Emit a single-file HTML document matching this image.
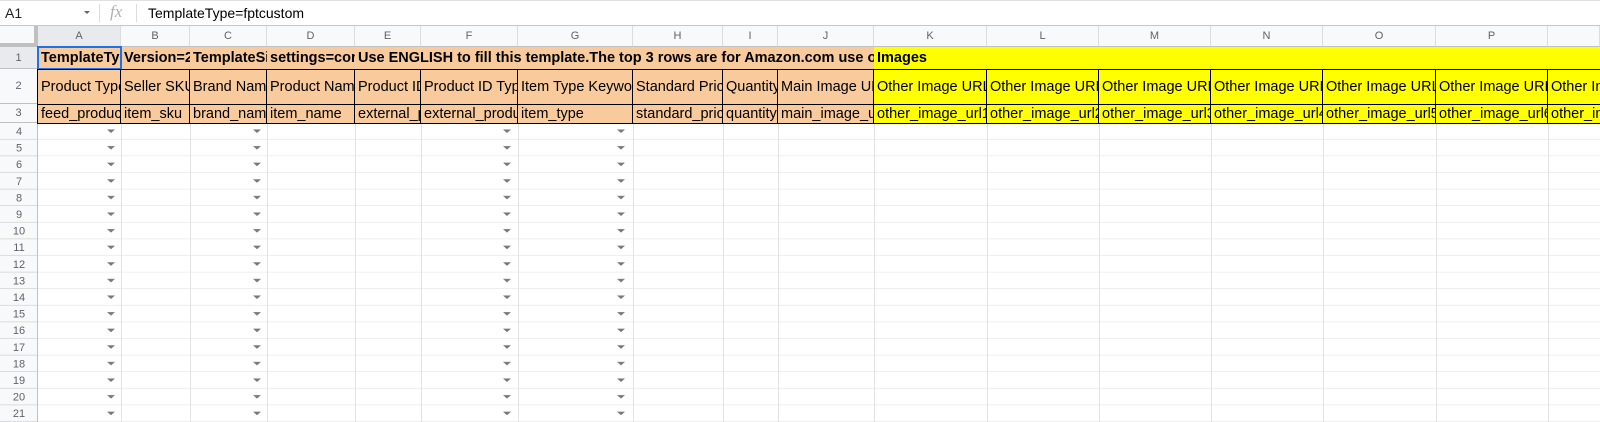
<!DOCTYPE html>
<html><head><meta charset="utf-8"><style>
*{box-sizing:border-box;margin:0;padding:0}
body{width:1600px;height:422px;overflow:hidden;background:#fff;font-family:"Liberation Sans",Arial,sans-serif;position:relative}
.a{position:absolute}
.c{position:absolute;overflow:hidden;white-space:nowrap;font-size:14.5px;color:#000;padding-left:3px;display:flex;align-items:center}
.h{position:absolute;font-size:11px;color:#5f6368;text-align:center;display:flex;align-items:center;justify-content:center;border-right:1px solid #dadce0;border-bottom:1px solid #c0c0c0;background:#f8f9fa}
.r2,.r3{border:1px solid #000;margin-left:-1px}
.o{background:#f9cb9c}.y{background:#ffff00}
.b{font-weight:bold}
</style></head><body>
<div class="a" style="left:0;top:0;width:1600px;height:26px;border-bottom:1px solid #c7c7c7;border-top:1px solid #e0e0e0"></div>
<div class="a" style="left:5px;top:5px;font-size:14px;color:#202124">A1</div>
<div class="a" style="left:84px;top:11px;width:0;height:0;border-left:3px solid transparent;border-right:3px solid transparent;border-top:3px solid #666"></div>
<div class="a" style="left:99px;top:4px;width:1px;height:18px;background:#dadce0"></div>
<div class="a" style="left:110px;top:2px;font-size:17px;font-style:italic;color:#b0b0b0;font-family:'Liberation Serif',serif">fx</div>
<div class="a" style="left:136px;top:4px;width:1px;height:18px;background:#dadce0"></div>
<div class="a" style="left:148px;top:5px;font-size:14px;color:#000">TemplateType=fptcustom</div>

<svg class="a" style="left:0;top:0" width="1600" height="422">
<defs>
<pattern id="hl" x="0" y="123" width="1600" height="16.6" patternUnits="userSpaceOnUse"><rect x="0" y="16" width="1600" height="0.8" fill="#e2e2e2"/></pattern>
<pattern id="ar" x="0" y="123" width="1600" height="16.6" patternUnits="userSpaceOnUse"><path d="M107 6.5 L115 6.5 L111 10 Z M253 6.5 L261 6.5 L257 10 Z M503 6.5 L511 6.5 L507 10 Z M617 6.5 L625 6.5 L621 10 Z" fill="#777"/></pattern>
<pattern id="rh" x="0" y="123" width="38" height="16.6" patternUnits="userSpaceOnUse"><rect x="0" y="16" width="38" height="0.8" fill="#c8c8c8"/></pattern>
</defs>
<rect x="38" y="123" width="1562" height="299" fill="url(#hl)"/>
<rect x="0" y="47" width="38" height="375" fill="#f8f9fa"/>
<rect x="0" y="123" width="38" height="299" fill="url(#rh)"/>
<g fill="#e2e2e2">
<rect x="121" y="123" width="1" height="299"/><rect x="190" y="123" width="1" height="299"/><rect x="267" y="123" width="1" height="299"/><rect x="355" y="123" width="1" height="299"/><rect x="421" y="123" width="1" height="299"/><rect x="518" y="123" width="1" height="299"/><rect x="633" y="123" width="1" height="299"/><rect x="723" y="123" width="1" height="299"/><rect x="778" y="123" width="1" height="299"/><rect x="874" y="123" width="1" height="299"/><rect x="987" y="123" width="1" height="299"/><rect x="1099" y="123" width="1" height="299"/><rect x="1211" y="123" width="1" height="299"/><rect x="1323" y="123" width="1" height="299"/><rect x="1436" y="123" width="1" height="299"/><rect x="1548" y="123" width="1" height="299"/>
</g>
<rect x="37" y="26" width="1" height="396" fill="#c0c0c0"/>
<rect x="38" y="123" width="600" height="299" fill="url(#ar)"/>
<g font-size="11" fill="#5f6368" text-anchor="middle" font-family="Liberation Sans, sans-serif">
<text x="19" y="135">4</text><text x="19" y="151.6">5</text><text x="19" y="168.2">6</text><text x="19" y="184.8">7</text><text x="19" y="201.4">8</text><text x="19" y="218">9</text><text x="19" y="234.6">10</text><text x="19" y="251.2">11</text><text x="19" y="267.8">12</text><text x="19" y="284.4">13</text><text x="19" y="301">14</text><text x="19" y="317.6">15</text><text x="19" y="334.2">16</text><text x="19" y="350.8">17</text><text x="19" y="367.4">18</text><text x="19" y="384">19</text><text x="19" y="400.6">20</text><text x="19" y="417.2">21</text>
</g>
</svg>

<div class="h" style="left:0;top:26px;width:38px;height:21px;border-right:4px solid #c0c0c0;border-bottom:4px solid #c0c0c0"></div>
<div class="h" style="left:38px;top:26px;width:83px;height:21px;background:#e8eaed">A</div>
<div class="h" style="left:121px;top:26px;width:69px;height:21px">B</div>
<div class="h" style="left:190px;top:26px;width:77px;height:21px">C</div>
<div class="h" style="left:267px;top:26px;width:88px;height:21px">D</div>
<div class="h" style="left:355px;top:26px;width:66px;height:21px">E</div>
<div class="h" style="left:421px;top:26px;width:97px;height:21px">F</div>
<div class="h" style="left:518px;top:26px;width:115px;height:21px">G</div>
<div class="h" style="left:633px;top:26px;width:90px;height:21px">H</div>
<div class="h" style="left:723px;top:26px;width:55px;height:21px">I</div>
<div class="h" style="left:778px;top:26px;width:96px;height:21px">J</div>
<div class="h" style="left:874px;top:26px;width:113px;height:21px">K</div>
<div class="h" style="left:987px;top:26px;width:112px;height:21px">L</div>
<div class="h" style="left:1099px;top:26px;width:112px;height:21px">M</div>
<div class="h" style="left:1211px;top:26px;width:112px;height:21px">N</div>
<div class="h" style="left:1323px;top:26px;width:113px;height:21px">O</div>
<div class="h" style="left:1436px;top:26px;width:112px;height:21px">P</div>
<div class="h" style="left:1548px;top:26px;width:52px;height:21px"></div>
<div class="h" style="left:0;top:47px;width:38px;height:22px;background:#e8eaed;border-right:1px solid #c0c0c0">1</div>
<div class="h" style="left:0;top:69px;width:38px;height:35px;border-right:1px solid #c0c0c0">2</div>
<div class="h" style="left:0;top:104px;width:38px;height:19px;border-right:1px solid #c0c0c0">3</div>

<div class="c o b" style="left:38px;top:47px;width:83px;height:22px">TemplateType=fptcustom</div>
<div class="c o b" style="left:121px;top:47px;width:69px;height:22px">Version=2023.0416</div>
<div class="c o b" style="left:190px;top:47px;width:77px;height:22px">TemplateSignature=</div>
<div class="c o b" style="left:267px;top:47px;width:88px;height:22px">settings=contentLanguage</div>
<div class="c o b" style="left:355px;top:47px;width:519px;height:22px">Use ENGLISH to fill this template.The top 3 rows are for Amazon.com use only</div>
<div class="c y b" style="left:874px;top:47px;width:726px;height:22px">Images</div>
<div class="a" style="left:37px;top:46px;width:85px;height:24px;border:2px solid #1a73e8"></div>

<div class="c o r2" style="left:38px;top:69px;width:84px;height:36px">Product Type</div>
<div class="c o r2" style="left:121px;top:69px;width:70px;height:36px">Seller SKU</div>
<div class="c o r2" style="left:190px;top:69px;width:78px;height:36px">Brand Name</div>
<div class="c o r2" style="left:267px;top:69px;width:89px;height:36px">Product Name</div>
<div class="c o r2" style="left:355px;top:69px;width:67px;height:36px">Product ID</div>
<div class="c o r2" style="left:421px;top:69px;width:98px;height:36px">Product ID Type</div>
<div class="c o r2" style="left:518px;top:69px;width:116px;height:36px">Item Type Keyword</div>
<div class="c o r2" style="left:633px;top:69px;width:91px;height:36px">Standard Price</div>
<div class="c o r2" style="left:723px;top:69px;width:56px;height:36px">Quantity</div>
<div class="c o r2" style="left:778px;top:69px;width:97px;height:36px">Main Image URL</div>
<div class="c y r2" style="left:874px;top:69px;width:114px;height:36px">Other Image URL1</div>
<div class="c y r2" style="left:987px;top:69px;width:113px;height:36px">Other Image URL2</div>
<div class="c y r2" style="left:1099px;top:69px;width:113px;height:36px">Other Image URL3</div>
<div class="c y r2" style="left:1211px;top:69px;width:113px;height:36px">Other Image URL4</div>
<div class="c y r2" style="left:1323px;top:69px;width:114px;height:36px">Other Image URL5</div>
<div class="c y r2" style="left:1436px;top:69px;width:113px;height:36px">Other Image URL6</div>
<div class="c y r2" style="left:1548px;top:69px;width:60px;height:36px">Other Image URL7</div>

<div class="c o r3" style="left:38px;top:104px;width:84px;height:20px">feed_product_type</div>
<div class="c o r3" style="left:121px;top:104px;width:70px;height:20px">item_sku</div>
<div class="c o r3" style="left:190px;top:104px;width:78px;height:20px">brand_name</div>
<div class="c o r3" style="left:267px;top:104px;width:89px;height:20px">item_name</div>
<div class="c o r3" style="left:355px;top:104px;width:67px;height:20px">external_product_id</div>
<div class="c o r3" style="left:421px;top:104px;width:98px;height:20px">external_product_id_type</div>
<div class="c o r3" style="left:518px;top:104px;width:116px;height:20px">item_type</div>
<div class="c o r3" style="left:633px;top:104px;width:91px;height:20px">standard_price</div>
<div class="c o r3" style="left:723px;top:104px;width:56px;height:20px">quantity</div>
<div class="c o r3" style="left:778px;top:104px;width:97px;height:20px">main_image_url</div>
<div class="c y r3" style="left:874px;top:104px;width:114px;height:20px">other_image_url1</div>
<div class="c y r3" style="left:987px;top:104px;width:113px;height:20px">other_image_url2</div>
<div class="c y r3" style="left:1099px;top:104px;width:113px;height:20px">other_image_url3</div>
<div class="c y r3" style="left:1211px;top:104px;width:113px;height:20px">other_image_url4</div>
<div class="c y r3" style="left:1323px;top:104px;width:114px;height:20px">other_image_url5</div>
<div class="c y r3" style="left:1436px;top:104px;width:113px;height:20px">other_image_url6</div>
<div class="c y r3" style="left:1548px;top:104px;width:60px;height:20px">other_image_url7</div>
</body></html>
